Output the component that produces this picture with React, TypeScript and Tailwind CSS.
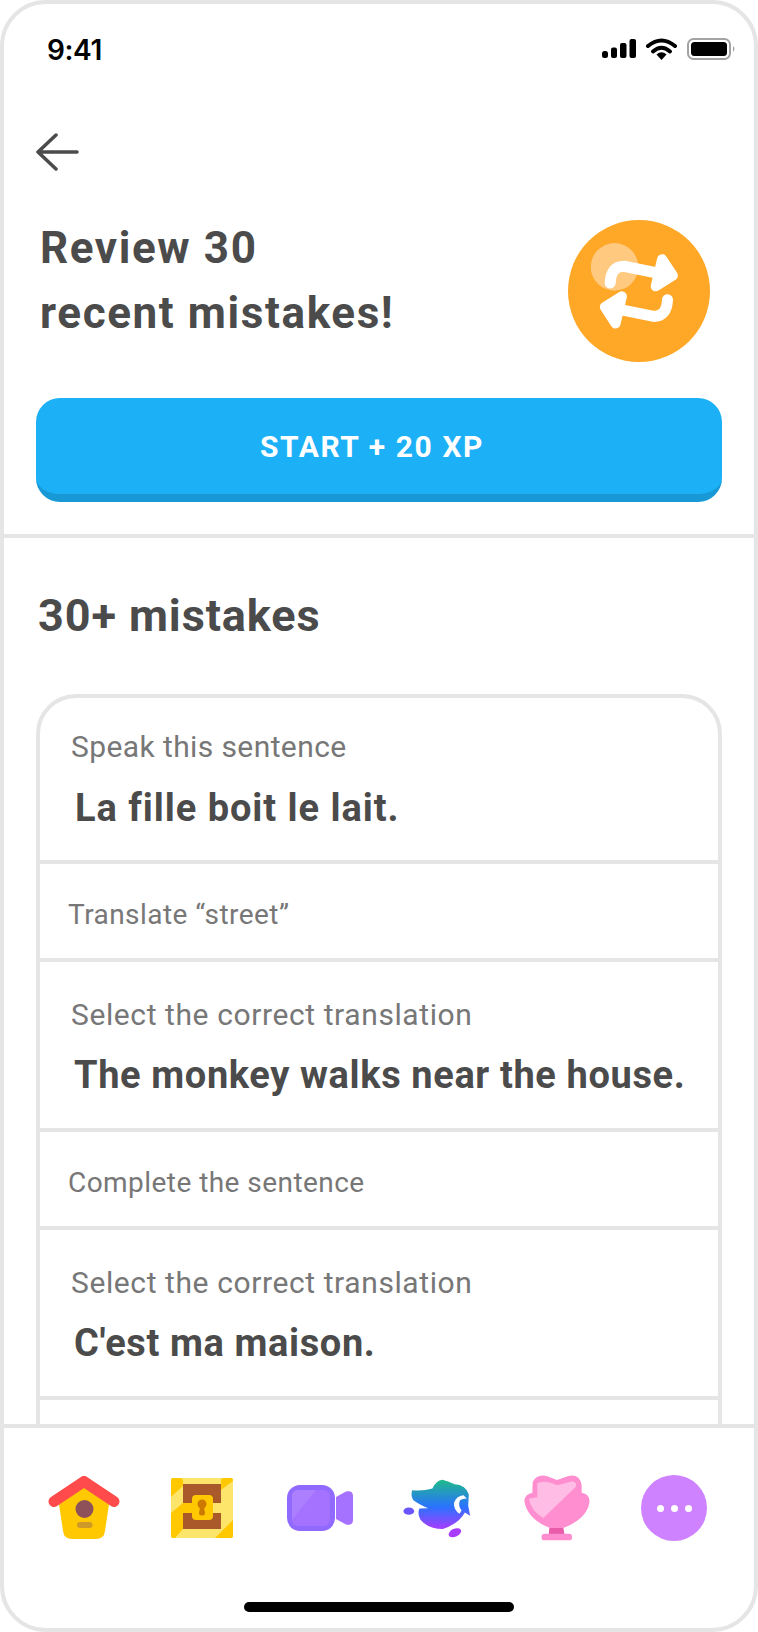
const font = "font-['Roboto','Noto_Sans',sans-serif]";

const StatusIcons = () => (
  <svg width="134" height="24" viewBox="0 0 134 24" className="block">
    <rect x="0" y="13" width="6" height="7" rx="2.5" fill="#000" />
    <rect x="9" y="9.5" width="6" height="10.5" rx="2" fill="#000" />
    <rect x="18" y="5" width="6.5" height="15" rx="2" fill="#000" />
    <rect x="27.5" y="1" width="6.5" height="19" rx="2" fill="#000" />
    <path d="M46 8 Q59.5 -3 73 8" fill="none" stroke="#000" strokeWidth="4" strokeLinecap="round" />
    <path d="M51 13.5 Q59.5 6 68 13.5" fill="none" stroke="#000" strokeWidth="4" strokeLinecap="round" />
    <path d="M54.5 16.5 Q59.5 12 64.5 16.5 L59.5 22 Z" fill="#000" />
    <rect x="86" y="1" width="42" height="20" rx="5.5" fill="none" stroke="#a3a3a3" strokeWidth="2" />
    <rect x="89" y="4" width="36" height="14" rx="3.5" fill="#000" />
    <path d="M131 8 Q134 10.5 131 14 Z" fill="#a3a3a3" />
  </svg>
);

const BackArrow = () => (
  <svg width="44" height="38" viewBox="0 0 44 38" className="block">
    <path d="M20 2 L2 19 L20 36 M2 19 H41" fill="none" stroke="#4b4b4b" strokeWidth="3.5" strokeLinecap="round" strokeLinejoin="round" />
  </svg>
);

// practice badge, viewBox is the 3x crop of the 200x180 area around it
const RepeatBadge = () => (
  <svg width="142" height="142" viewBox="85 60 424 424" className="block">
    <circle cx="297" cy="272" r="212" fill="#ffa726" />
    <circle cx="224" cy="200" r="71" fill="#ffc97f" />
    <g fill="#fff" stroke="#fff" strokeLinecap="round" strokeLinejoin="round">
      <path d="M211 248 Q213 198 252 198 L370 222" fill="none" strokeWidth="33" />
      <path d="M366 177 L398 226 L347 258 Z" strokeWidth="30" />
      <g transform="rotate(180 296.5 273)">
        <path d="M211 248 Q213 198 252 198 L370 222" fill="none" strokeWidth="33" />
        <path d="M366 177 L398 226 L347 258 Z" strokeWidth="30" />
      </g>
    </g>
  </svg>
);

const HomeIcon = () => (
  <svg width="72" height="64" viewBox="48 1475 72 64" className="block">
    <path d="M59 1503 L84 1484 L109 1503 L105 1530 Q104 1538 96 1538 H72 Q64 1538 63 1530 Z" fill="#ffc800" />
    <path d="M54 1500.5 L84 1480.5 L114 1500.5" fill="none" stroke="#ff4b4b" strokeWidth="11" strokeLinecap="round" strokeLinejoin="round" />
    <circle cx="84.5" cy="1508" r="9" fill="#8e5159" />
    <rect x="77" y="1521" width="15.5" height="6" rx="3" fill="#cd9a2a" />
  </svg>
);

const ChestIcon = () => (
  <svg width="62" height="60" viewBox="171 1478 62 60" className="block">
    <rect x="171" y="1478" width="62" height="60" rx="2.5" fill="#fde46b" />
    <rect x="183" y="1484" width="38" height="45" fill="#a9592a" />
    <rect x="183" y="1503" width="38" height="10" fill="#fde46b" />
    <path d="M171 1480 Q171 1478 173 1478 H180 Q183 1478 183 1481 V1486 L171 1497 Z" fill="#ffc800" />
    <path d="M171 1513 L183 1503 H192 V1513 H183 V1529 L175 1538 H173 Q171 1538 171 1536 Z" fill="#ffc800" />
    <path d="M221 1490 V1481 Q221 1478 224 1478 H231 Q233 1478 233 1480 V1481 Z" fill="#ffc800" />
    <path d="M215 1538 L233 1520 V1536 Q233 1538 231 1538 Z" fill="#ffc800" />
    <rect x="192" y="1495" width="21" height="25" rx="4" fill="#ffc800" />
    <circle cx="202" cy="1504" r="4.5" fill="#cd7900" />
    <path d="M200.5 1505 H203.5 L205 1513 Q205 1515.5 203 1515.5 H201 Q199 1515.5 199 1513 Z" fill="#cd7900" />
  </svg>
);

const VideoIcon = () => (
  <svg width="66" height="46" viewBox="287 1485 66 46" className="block">
    <rect x="287" y="1485" width="48" height="46" rx="13" fill="#9069ff" />
    <rect x="292" y="1490" width="38" height="36" rx="6" fill="#a572ff" />
    <path d="M292 1520 V1496 Q292 1490 298 1490 H316 Z" fill="#ac7fff" />
    <path d="M336 1497 L346 1491.5 Q353 1490 353 1496 V1520 Q353 1526 346 1524.5 L336 1519 Z" fill="#a572ff" />
  </svg>
);

const VideoCallDuo = () => (
  <svg width="68" height="59" viewBox="70 205 204 178" className="block">
    <defs>
      <linearGradient id="duoFill" x1="0" y1="0" x2="0" y2="1">
        <stop offset="0" stopColor="#1fbb88" />
        <stop offset="0.55" stopColor="#2a72ff" />
        <stop offset="1" stopColor="#a83cff" />
      </linearGradient>
    </defs>
    <path
      d="M97 239 Q130 242 158 234 Q170 208 188 207 Q205 210 225 221 Q258 222 268 252 L266 285 L272 316 L256 306 Q240 338 190 356 Q145 356 122 328 Q112 310 119 294 L145 293 Q115 280 100 268 Q92 255 97 239 Z"
      fill="url(#duoFill)"
    />
    <path d="M252 254 Q230 256 223 278 Q222 298 240 310 L246 300 Q236 288 240 272 Q244 264 262 264 Z" fill="#fff" />
    <ellipse cx="87" cy="302" rx="16" ry="11" fill="#6b55ff" />
    <ellipse cx="226" cy="367" rx="20" ry="12" transform="rotate(-25 226 367)" fill="#a83cff" />
  </svg>
);

const ShellIcon = () => (
  <svg width="66" height="66" viewBox="432 197 198 198" className="block">
    <path d="M508 355 H550 L554 378 H506 Z" fill="#e85caa" />
    <rect x="485" y="373" width="91" height="20" rx="8" fill="#ff8ed0" />
    <path d="M458 218 Q470 193 500 200 L531 212 L565 200 Q600 193 605 228 L605 250 Q632 255 628 282 Q618 330 550 356 H510 Q442 330 433 275 Q433 255 457 250 Z" fill="#ff8ed0" />
    <path d="M472 222 Q495 210 531 228 L578 216 Q594 222 586 234 L490 326 Q452 304 447 268 L472 264 Z" fill="#ffbde5" />
  </svg>
);

const MoreIcon = () => (
  <div className="w-[66px] h-[66px] rounded-full bg-[#ce82ff] flex items-center justify-center gap-[7px]">
    <span className="w-[7px] h-[7px] rounded-full bg-white" />
    <span className="w-[7px] h-[7px] rounded-full bg-white" />
    <span className="w-[7px] h-[7px] rounded-full bg-white" />
  </div>
);

const MistakeRow = ({ label, sentence, first }: { label: string; sentence?: string; first?: boolean }) => {
  if (!sentence) {
    return (
      <div className="h-[98px] border-b-4 border-[#e5e5e5] pl-[28px] pt-[33px]">
        <p className="text-[28px] leading-[36px] text-[#777777] tracking-[0.45px]">{label}</p>
      </div>
    );
  }
  return (
    <div className={`${first ? "h-[166px] pt-[31px]" : "h-[170px] pt-[35px]"} border-b-4 border-[#e5e5e5] pl-[31px]`}>
      <p className={`text-[30px] leading-[36px] text-[#777777] ${first ? "tracking-[0.4px]" : "tracking-[0.6px]"}`}>{label}</p>
      <p className={`${first ? "mt-[21px] pl-[4px] tracking-[0.95px]" : "mt-[20px] pl-[3px] tracking-[0.62px]"} text-[38px] leading-[44px] font-bold text-[#4b4b4b]`}>{sentence}</p>
    </div>
  );
};

export default function App() {
  return (
    <div className={`${font} w-[758px] h-[1632px] bg-white border-4 border-[#e5e5e5] rounded-[46px] overflow-hidden flex flex-col`}>
      <div className="border-b-4 border-[#e5e5e5] h-[534px] shrink-0">
        {/* Status bar */}
        <div className="flex items-center justify-between pl-[43px] pr-[18px] pt-[29px]">
          <span className="font-['Inter',sans-serif] font-semibold text-[28px] leading-[34px] tracking-[-0.4px] text-black">9:41</span>
          <StatusIcons />
        </div>

        <div className="pl-[32px] pt-[66px]">
          <BackArrow />
        </div>

        <div className="flex justify-between pl-[36px] pr-[44px] mt-[49px]">
          <h1 className="text-[44px] leading-[65px] font-bold text-[#4b4b4b] tracking-[1.6px] -mt-[4px]">
            Review 30
            <br />
            recent mistakes!
          </h1>
          <RepeatBadge />
        </div>

        <button className="mx-[32px] mt-[36px] block w-[686px] h-[104px] pr-[14px] rounded-[24px] bg-[#1cb0f6] border-b-8 border-[#1899d6] text-white text-[30px] font-bold tracking-[1.6px]">
          START + 20 XP
        </button>
      </div>

      {/* Scrolled list, cut off by the tab bar */}
      <div className="flex-1 min-h-0 overflow-hidden px-[32px]">
        <h2 className="pt-[52px] pl-[2px] text-[45px] leading-[52px] font-bold text-[#4b4b4b] tracking-[0.9px]">30+ mistakes</h2>
        <div className="mt-[52px] border-4 border-[#e5e5e5] rounded-[40px] pb-[100px]">
          <MistakeRow first label="Speak this sentence" sentence="La fille boit le lait." />
          <MistakeRow label="Translate “street”" />
          <MistakeRow label="Select the correct translation" sentence="The monkey walks near the house." />
          <MistakeRow label="Complete the sentence" />
          <MistakeRow label="Select the correct translation" sentence="C'est ma maison." />
        </div>
      </div>

      {/* Tab bar */}
      <div className="h-[204px] shrink-0 border-t-4 border-[#e5e5e5] flex flex-col items-center">
        <div className="w-full h-[174px] flex items-center pl-[44px] pb-[14px]">
          <HomeIcon />
          <div className="ml-[51px]"><ChestIcon /></div>
          <div className="ml-[54px]"><VideoIcon /></div>
          <div className="ml-[50px]"><VideoCallDuo /></div>
          <div className="ml-[53px]"><ShellIcon /></div>
          <div className="ml-[51px]"><MoreIcon /></div>
        </div>
        <div className="w-[270px] h-[10px] rounded-full bg-black" />
      </div>
    </div>
  );
}
